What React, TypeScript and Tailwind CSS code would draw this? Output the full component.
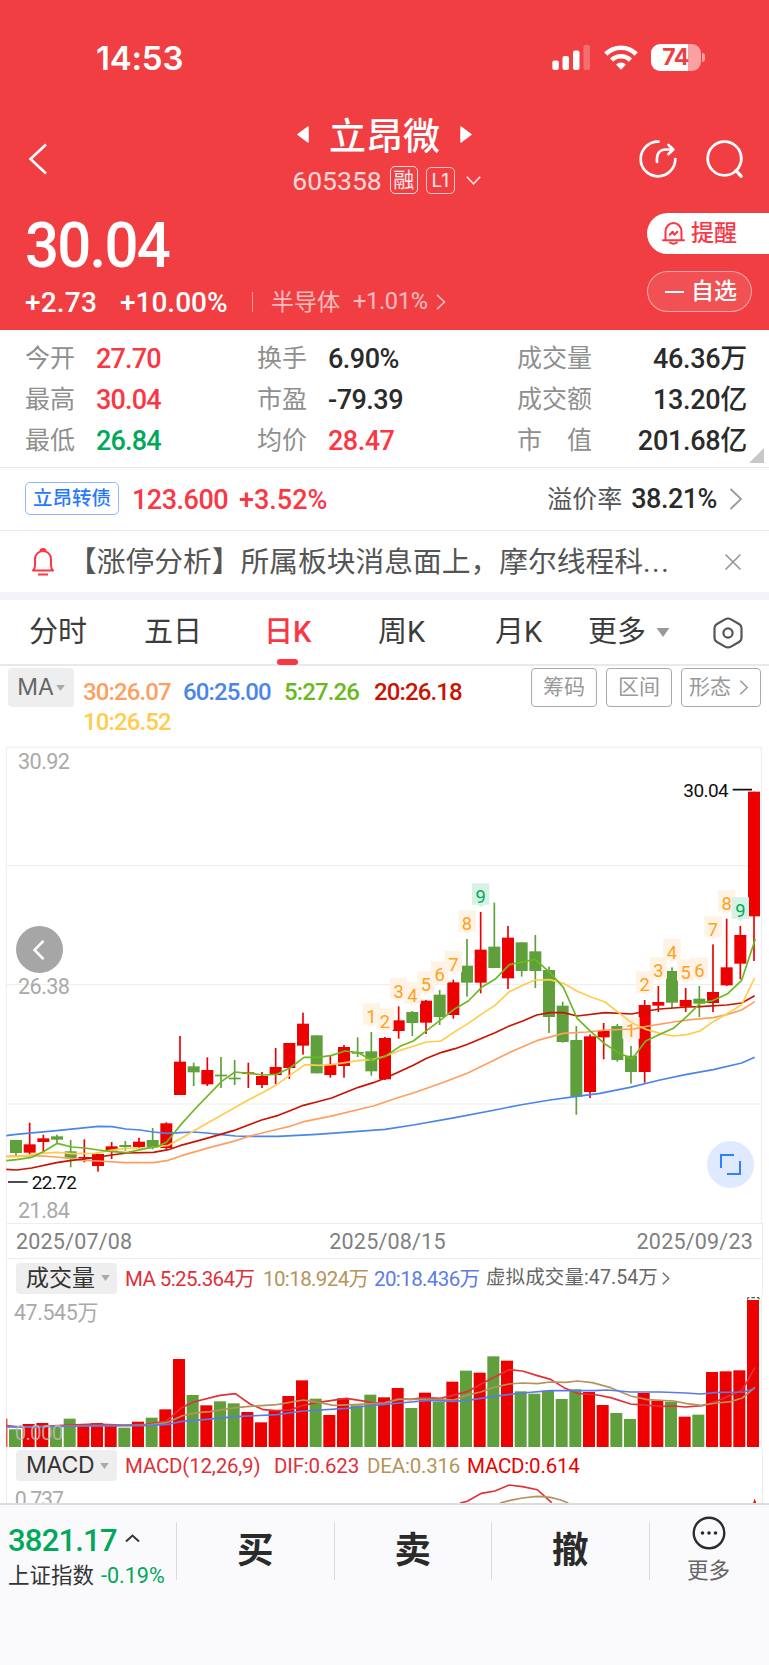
import { X } from 'lucide-react'

const RED = '#ec0000'
const GREEN = '#5f9f3c'

// candle: [up, body top, body bottom, high, low]
const candles: [number, number, number, number, number][] = [
  [0, 1200, 1239, 1200, 1248],
  [1, 1213, 1238, 1148, 1242],
  [1, 1195, 1206, 1184, 1236],
  [0, 1189, 1199, 1184, 1209],
  [0, 1234, 1254, 1200, 1282],
  [1, 1251, 1255, 1198, 1267],
  [1, 1242, 1278, 1242, 1295],
  [1, 1219, 1231, 1206, 1257],
  [0, 1215, 1221, 1203, 1232],
  [1, 1205, 1221, 1193, 1224],
  [0, 1200, 1222, 1164, 1228],
  [1, 1150, 1224, 1147, 1228],
  [1, 965, 1065, 888, 1065],
  [0, 979, 997, 968, 1038],
  [1, 990, 1033, 952, 1038],
  [0, 1004, 1009, 951, 1044],
  [0, 1013, 1018, 960, 1035],
  [1, 997, 1002, 968, 1044],
  [1, 1008, 1035, 996, 1044],
  [1, 981, 1005, 924, 1032],
  [1, 909, 984, 909, 1017],
  [1, 851, 917, 818, 944],
  [0, 886, 1000, 886, 1000],
  [1, 975, 1005, 948, 1013],
  [1, 921, 978, 915, 1013],
  [0, 936, 941, 892, 951],
  [0, 934, 994, 876, 1007],
  [1, 894, 1018, 891, 1020],
  [1, 841, 873, 799, 896],
  [0, 816, 849, 813, 888],
  [1, 782, 848, 780, 882],
  [0, 764, 831, 750, 855],
  [1, 727, 825, 719, 836],
  [0, 677, 728, 597, 770],
  [1, 629, 728, 516, 760],
  [0, 620, 684, 488, 684],
  [1, 593, 715, 558, 747],
  [0, 607, 693, 607, 710],
  [0, 634, 693, 585, 744],
  [0, 690, 831, 680, 879],
  [0, 797, 906, 785, 908],
  [0, 900, 1070, 858, 1124],
  [1, 889, 1056, 883, 1074],
  [1, 872, 892, 849, 958],
  [0, 858, 960, 852, 965],
  [0, 947, 996, 918, 1031],
  [1, 795, 996, 780, 1028],
  [1, 786, 797, 738, 816],
  [0, 693, 788, 682, 804],
  [1, 780, 800, 744, 816],
  [0, 776, 791, 738, 831],
  [1, 756, 789, 613, 816],
  [1, 682, 736, 536, 738],
  [1, 585, 671, 558, 718],
  [1, 155, 529, 155, 663],
]

const volumes = [
  628, 612, 609, 620, 596, 615, 609, 615, 623, 605, 593, 568, 417, 525, 556, 544, 550, 576, 607, 572,
  528, 481, 536, 585, 535, 556, 524, 532, 504, 564, 518, 545, 485, 452, 458, 409, 422, 514, 521, 512,
  537, 508, 516, 555, 579, 597, 519, 542, 545, 590, 584, 456, 454, 451, 240,
]

const maLines = [
  {
    color: '#4a86e8',
    points:
      '19,1187 48,1183 170,1172 295,1159 336,1160 378,1167 420,1170 460,1176 500,1180 540,1178 582,1176 620,1179 665,1184 706,1188 750,1189 835,1189 950,1183 1155,1168 1240,1155 1365,1133 1485,1110 1560,1095 1650,1080 1725,1070 1800,1060 1890,1042 1980,1020 2060,1003 2140,989 2225,969 2264,952',
  },
  {
    color: '#ff9f5f',
    points:
      '19,1249 110,1247 170,1251 210,1255 250,1261 295,1263 375,1268 460,1268 505,1261 545,1247 620,1225 700,1204 750,1188 835,1167 870,1159 915,1144 990,1129 1120,1098 1200,1071 1240,1059 1325,1029 1405,998 1500,952 1530,937 1610,902 1690,880 1760,876 1820,870 1900,867 1940,859 2020,846 2080,838 2140,833 2180,824 2225,810 2264,785',
  },
  {
    color: '#c81400',
    points:
      '19,1288 50,1290 95,1284 170,1268 210,1262 290,1252 335,1245 380,1239 460,1237 505,1229 540,1217 620,1195 700,1172 785,1140 835,1126 870,1112 910,1096 950,1086 995,1074 1075,1042 1120,1028 1155,1015 1240,976 1280,955 1325,937 1365,926 1405,912 1442,896 1485,878 1530,857 1570,842 1610,825 1650,818 1690,818 1732,828 1815,818 1895,822 1940,813 1980,807 2060,801 2100,800 2180,795 2225,789 2264,767',
  },
  {
    color: '#ffcc4d',
    points:
      '19,1250 60,1250 120,1240 172,1237 215,1241 285,1240 330,1231 375,1225 440,1224 505,1216 545,1194 582,1172 665,1125 750,1077 790,1057 830,1034 915,974 955,976 995,974 1075,962 1120,958 1155,949 1200,931 1280,906 1323,903 1365,875 1405,850 1442,824 1485,796 1528,755 1570,735 1605,720 1650,719 1690,730 1732,754 1775,772 1815,786 1855,817 1895,848 1940,869 1980,880 2020,888 2060,884 2100,873 2140,845 2180,822 2225,794 2264,714',
  },
  {
    color: '#6aba1f',
    points:
      '19,1262 50,1259 95,1252 130,1235 172,1210 215,1221 255,1224 295,1230 330,1234 380,1238 440,1225 475,1219 500,1206 540,1157 582,1110 665,1024 705,996 745,1000 790,1005 830,1003 870,984 912,952 955,952 995,946 1035,933 1075,938 1118,962 1155,949 1200,919 1240,903 1280,872 1323,839 1365,806 1405,783 1447,740 1485,718 1528,674 1605,658 1650,698 1690,742 1732,836 1775,877 1815,912 1855,938 1897,956 1937,903 1980,883 2020,865 2060,830 2100,790 2140,781 2183,761 2225,721 2266,597',
  },
]

const volumeLines = [
  {
    color: '#e03038',
    points:
      '19,617 60,621 110,620 190,616 280,612 370,615 440,613 500,603 545,563 580,546 660,526 706,521 750,552 790,569 830,572 870,570 910,556 950,548 1040,535 1120,548 1152,549 1193,536 1232,538 1272,533 1322,535 1402,515 1442,493 1482,472 1527,449 1567,453 1612,467 1652,478 1692,503 1732,520 1792,525 1832,533 1892,552 1982,559 2022,558 2057,561 2107,557 2152,543 2192,526 2227,510 2265,442',
  },
  {
    color: '#b5935a',
    points:
      '19,621 440,615 500,608 545,588 590,578 630,575 706,563 750,559 830,554 910,540 960,548 1000,556 1060,554 1152,549 1197,538 1322,538 1362,540 1402,525 1442,516 1482,502 1527,492 1567,489 1612,491 1652,486 1697,487 1732,483 1777,488 1832,503 1892,528 1942,539 2022,543 2057,550 2102,556 2152,549 2192,545 2227,534 2265,502',
  },
  {
    color: '#5b7be6',
    points:
      '19,620 110,621 250,618 440,617 505,613 545,604 620,598 706,590 830,584 910,573 1040,565 1100,558 1152,553 1232,546 1292,541 1362,544 1402,541 1482,529 1567,519 1652,512 1782,512 1822,510 1892,516 1982,516 2057,519 2102,522 2152,517 2232,516 2265,505',
  },
]

const quotes = [
  ['今开', '27.70', 'text-[#fb3744]', '换手', '6.90%', 'text-[#2b2b2b]', '成交量', '46.36万'],
  ['最高', '30.04', 'text-[#fb3744]', '市盈', '-79.39', 'text-[#2b2b2b]', '成交额', '13.20亿'],
  ['最低', '26.84', 'text-[#00a85a]', '均价', '28.47', 'text-[#fb3744]', '市值', '201.68亿'],
]

function Triangle({ className }: { className: string }) {
  return (
    <svg className={className} viewBox="0 0 10 7">
      <path d="M0 0h10L5 7z" fill="currentColor" />
    </svg>
  )
}

function Arrow({ className }: { className: string }) {
  return (
    <svg className={className} viewBox="0 0 10 16" fill="none" stroke="currentColor" strokeWidth="1.6">
      <path d="M1 0.800L8.500 8L1 15.200" />
    </svg>
  )
}

function Signals() {
  const marks = []
  for (const start of [26, 45]) {
    for (let n = 1; n <= 9; n++) {
      const i = start + n - 1
      const x = 48 + 41 * i
      const high = candles[i][3]
      const last = n === 9
      marks.push(
        <g key={i}>
          <path d={`M${x - 26} ${high - 86}h52v64h-16l-10 8l-10-8h-16z`} fill={last ? '#d5f2e5' : '#fff3e6'} />
          <text x={x} y={high - 26} textAnchor="middle" fontSize="55" fill={last ? '#00ab5c' : '#ffa020'}>
            {n}
          </text>
        </g>,
      )
    }
  }
  return <>{marks}</>
}

function PricePanel() {
  return (
    <div className="relative h-[483px]">
      <svg className="block h-full w-full" viewBox="0 0 2307 1449" fontFamily="Roboto, sans-serif">
        <path
          d="M19 1449V22H2284V1449M19 377H2284M19 734H2284M19 1092H2284"
          fill="none"
          stroke="#ededef"
          strokeWidth="3"
        />
        <g fill="#aaaaaa" fontSize="65">
          <text x="54" y="88" textLength="156">30.92</text>
          <text x="54" y="761" textLength="156">26.38</text>
          <text x="54" y="1435" textLength="156">21.84</text>
        </g>
        {candles.map(([up, top, bottom, high, low], i) => {
          const x = 48 + 41 * i
          return (
            <g key={i} fill={up ? RED : GREEN}>
              <rect x={x - 2.5} y={high} width="5" height={low - high} />
              <rect x={x - 18} y={top} width="36" height={bottom - top} />
            </g>
          )
        })}
        <Signals />
        {maLines.map((l) => (
          <polyline key={l.color} points={l.points} fill="none" stroke={l.color} strokeWidth="5" strokeLinejoin="round" />
        ))}
        <path d="M24 1326H83M2198 149H2256" stroke="#111" strokeWidth="5" />
        <g fill="#111" fontSize="57">
          <text x="95" y="1348" textLength="136">22.72</text>
          <text x="2050" y="171" textLength="136">30.04</text>
        </g>
      </svg>
      <button className="absolute left-[16px] top-[186px] flex size-[47px] items-center justify-center rounded-full bg-[#a6a6a6]">
        <svg className="mr-[2px] h-5 w-3" viewBox="0 0 12 20" fill="none" stroke="#fff" strokeWidth="2.6">
          <path d="M10.500 0.800L1.500 10l9 9.200" />
        </svg>
      </button>
      <button className="absolute left-[707px] top-[401px] flex size-[47px] items-center justify-center rounded-full bg-[#dfe9ff]">
        <svg className="size-[21px]" viewBox="0 0 21 21" fill="none" stroke="#2f80ff" strokeWidth="2">
          <path d="M1 14V1h13M20 7v13H7" />
        </svg>
      </button>
    </div>
  )
}

function VolumePanel() {
  return (
    <svg className="block h-[154px] w-full" viewBox="0 225 2307 462" fontFamily='Roboto, "Noto Sans CJK SC", sans-serif'>
      <path d="M19 225V687M2284 225V687" stroke="#ededef" strokeWidth="3" />
      <text x="42" y="300" fill="#aaaaaa" fontSize="64" textLength="254">47.545万</text>
      <rect x="19" y="596" width="3" height="85" fill={RED} />
      {volumes.map((top, i) => (
        <rect key={i} x={27 + 41 * i} y={top} width="36" height={681 - top} fill={candles[i][0] ? RED : GREEN} />
      ))}
      <path d="M2243 239V233H2277V239" fill="none" stroke="#333" strokeWidth="3" strokeDasharray="11 6" />
      {volumeLines.map((l) => (
        <polyline key={l.color} points={l.points} fill="none" stroke={l.color} strokeWidth="5" strokeLinejoin="round" />
      ))}
      <text x="44" y="659" fill="#bbbbbb" fillOpacity="0.85" fontSize="62" textLength="146">0.000</text>
    </svg>
  )
}

function Header() {
  return (
    <header className="h-[330px] bg-[#f03e42] text-white">
      <div className="flex h-[115px] items-center justify-between pl-[96px] pr-[64px]">
        <span className="pt-[2px] font-['Inter'] text-[33px] font-semibold tracking-[-0.200px]">14:53</span>
        <div className="flex items-center">
          <svg className="h-[25px] w-[39px]" viewBox="0 0 39 25" fill="#fff">
            <rect x="0.300" y="15.500" width="6.500" height="9.500" rx="2" />
            <rect x="10.500" y="11" width="6.500" height="14" rx="2" />
            <rect x="21" y="5.500" width="6.500" height="19.500" rx="2" />
            <rect x="31.500" y="0" width="6.500" height="25" rx="2" opacity="0.25" />
          </svg>
          <svg className="ml-[13px] h-[25px] w-[34px]" viewBox="0 0 34 25" fill="none" stroke="#fff" strokeWidth="4.600">
            <path d="M1.800 9a21.500 21.500 0 0 1 30.400 0" />
            <path d="M7.600 15.200a13.300 13.300 0 0 1 18.800 0" />
            <path d="M17 24.800l-5-5.200a7.200 7.200 0 0 1 10 0z" fill="#fff" stroke="none" />
          </svg>
          <div className="ml-[13px] flex h-[27px] w-[50px] items-center justify-center rounded-[9px] bg-[linear-gradient(90deg,#fff_75%,#f8a0a2_75%)] pr-[1px] font-['Inter'] text-[23px] font-bold leading-none tracking-[-0.500px] text-[#f03e42]">
            74
          </div>
          <div className="ml-[1px] h-[9px] w-[3px] rounded-r-full bg-[#f8a0a2]" />
        </div>
      </div>

      <div className="grid h-[90px] grid-cols-[1fr_auto_1fr] items-center">
        <svg className="mb-[3px] ml-[28px] h-[32px] w-[20px]" viewBox="0 0 20 32" fill="none" stroke="#fff" strokeWidth="2.600">
          <path d="M18 1.500L2.500 16l15.500 14.500" />
        </svg>
        <div className="w-[200px]">
          <div className="flex h-[40px] items-center justify-center pb-[1px]">
            <svg className="mr-[20px] h-[17px] w-[12px]" viewBox="0 0 12 17">
              <path d="M11 1v15L1 8.500z" fill="#fff" stroke="#fff" strokeWidth="1.500" strokeLinejoin="round" />
            </svg>
            <h1 className="font-['Noto_Sans_CJK_SC'] text-[37px] font-medium leading-none">立昂微</h1>
            <svg className="ml-[20px] h-[17px] w-[12px]" viewBox="0 0 12 17">
              <path d="M1 1v15L11 8.500z" fill="#fff" stroke="#fff" strokeWidth="1.500" strokeLinejoin="round" />
            </svg>
          </div>
          <div className="flex h-[50px] items-center justify-center pl-[4px]">
            <span className="pt-[2px] text-[26.500px] leading-none text-white/80">605358</span>
            <span className="ml-[8px] flex h-[28px] w-[28px] items-center justify-center rounded-[5px] border-[1.500px] border-white/80 text-[21px] leading-none text-white/90">融</span>
            <span className="ml-[8px] flex h-[27px] w-[29px] items-center justify-center rounded-[5px] border border-white/70 font-['Inter'] text-[19px] leading-none text-white/90">L1</span>
            <svg className="ml-[11px] h-[9px] w-[15px]" viewBox="0 0 15 9" fill="none" stroke="#fff" strokeOpacity="0.85" strokeWidth="1.600">
              <path d="M0.800 0.800l6.700 7l6.700-7" />
            </svg>
          </div>
        </div>
        <div className="mb-[3px] flex items-center justify-end pr-[25px]">
          <svg className="size-[38px]" viewBox="0 0 38 38" fill="none" stroke="#fff" strokeWidth="2.700" strokeLinecap="round" strokeLinejoin="round">
            <path d="M19.500 1.700a17.300 17.300 0 1 0 16.800 17.300" />
            <path d="M18 22c-0.600-8 2-12.500 9-12.500h6M29.500 5l4.800 4.500l-4.800 4.500" />
          </svg>
          <svg className="ml-[29px] size-[38px]" viewBox="0 0 38 38" fill="none" stroke="#fff" strokeWidth="2.800" strokeLinecap="round">
            <circle cx="18.500" cy="18.500" r="16.800" />
            <path d="M30 30.500l5 5.700" strokeWidth="3.400" />
          </svg>
        </div>
      </div>

      <div className="flex justify-between">
        <div className="pl-[25px]">
          <div className="flex h-[79px] origin-left scale-x-[0.95] items-center pt-[2px] text-[63px] font-medium leading-none tracking-[-1.800px]">30.04</div>
          <div className="flex h-[36px] items-center leading-none">
            <span className="w-[95px] pt-[2px] text-[28px] font-medium tracking-[0.200px]">+2.73</span>
            <span className="w-[132px] pt-[2px] text-[28px] font-medium">+10.00%</span>
            <span className="h-[20px] w-px bg-white/50" />
            <span className="ml-[18px] text-[23px] text-white/65">半导体</span>
            <span className="ml-[13px] text-[23.500px] tracking-[-0.300px] text-white/65">+1.01%</span>
            <Arrow className="ml-[8px] h-[16px] w-[10px] text-white/65" />
          </div>
        </div>
        <div className="flex w-[122px] flex-col gap-[17px] pt-[8px] text-[23px] font-medium leading-none">
          <button className="flex h-[41px] items-center rounded-l-full bg-white pl-[15px] text-[#fb3744]">
            <svg className="mr-[6px] h-[23px] w-[23px]" viewBox="0 0 23 23" fill="none" stroke="currentColor" strokeWidth="2" strokeLinejoin="round" strokeLinecap="round">
              <path d="M1 18.200h21M3.500 18V9.500a8 8.500 0 0 1 16 0V18M8 20.500a5 4 0 0 0 7 0" />
              <path d="M7.800 12.800l2.800-3l1.800 3l3-3" />
            </svg>
            提醒
          </button>
          <button className="flex h-[41px] w-[105px] items-center rounded-full border border-white/50 bg-white/10 pl-[17px]">
            <span className="mr-[7px] h-[2px] w-[19px] bg-white" />
            自选
          </button>
        </div>
      </div>
    </header>
  )
}

function Quotes() {
  return (
    <section className="relative h-[138px] border-b border-[#e9e9eb] pl-[25px] pt-[8px] leading-none">
      {quotes.map(([a, av, ac, b, bv, bc, c, cv]) => (
        <div key={a} className="grid h-[41.200px] grid-cols-[232px_260px_230px] items-center">
          <div className="flex items-center">
            <span className="w-[71px] text-[25px] text-[#8f8f8f]">{a}</span>
            <span className={`pt-[2px] text-[27px] font-medium tracking-[-0.800px] ${ac}`}>{av}</span>
          </div>
          <div className="flex items-center">
            <span className="w-[71px] text-[25px] text-[#8f8f8f]">{b}</span>
            <span className={`pt-[2px] text-[27px] font-medium tracking-[-0.500px] ${bc}`}>{bv}</span>
          </div>
          <div className="flex items-center justify-between">
            <span className="flex w-[75px] justify-between text-[25px] text-[#8f8f8f]">
              {c.split('').map((ch) => (
                <span key={ch}>{ch}</span>
              ))}
            </span>
            <span className="pt-[1px] text-[27px] font-medium tracking-[-0.300px] text-[#2b2b2b]">{cv}</span>
          </div>
        </div>
      ))}
      <svg className="absolute bottom-[4px] right-[5px] size-[15px]" viewBox="0 0 15 15">
        <path d="M15 0v15H0z" fill="#c8c8c8" />
      </svg>
    </section>
  )
}

function BondRow() {
  return (
    <section className="flex h-[63px] items-center border-b border-[#e9e9eb] pl-[25px] leading-none">
      <span className="mb-[1px] flex h-[33px] w-[94px] items-center justify-center rounded-[5px] border border-[#8fb6ff] text-[19.500px] font-medium text-[#2878ff]">立昂转债</span>
      <span className="ml-[13px] w-[107px] pt-[2px] text-[27px] font-medium tracking-[-0.500px] text-[#fb3744]">123.600</span>
      <span className="pt-[2px] text-[27px] font-medium text-[#fb3744]">+3.52%</span>
      <span className="ml-auto text-[25px] text-[#555]">溢价率</span>
      <span className="ml-[9px] text-[27px] font-medium tracking-[-0.500px] text-[#2b2b2b]">38.21%</span>
      <svg className="ml-[12px] mr-[26px] h-[22px] w-[14px]" viewBox="0 0 14 22" fill="none" stroke="#999" strokeWidth="1.800">
        <path d="M1.500 1l10.500 10l-10.500 10" />
      </svg>
    </section>
  )
}

function NewsRow() {
  return (
    <section className="flex h-[61px] items-center pl-[31px]">
      <svg className="h-[28px] w-[24px]" viewBox="0 0 24 28" fill="none" stroke="#fb3744" strokeWidth="2" strokeLinejoin="round">
        <path d="M9.500 3a2.500 2 0 0 1 5 0M2 22.500c1.500-1.500 2-3 2-5V11a8 8 0 0 1 16 0v6.500c0 2 0.500 3.500 2 5zM7 26.600h10" />
      </svg>
      <span className="ml-[13px] pt-[2px] text-[28.750px] leading-none text-[#555]">
        【涨停分析】所属板块消息面上，摩尔线程科<span className="tracking-[1.500px]">...</span>
      </span>
      <X className="ml-auto mr-[22px] size-[28px] shrink-0 text-[#999]" strokeWidth={1.5} />
    </section>
  )
}

function Tabs() {
  return (
    <nav className="flex h-[66px] items-center border-b-2 border-[#e9e9eb] pl-[29px] pt-[1px] text-[29px] leading-none text-[#3c3c3c]">
      <span className="w-[115px]">分时</span>
      <span className="w-[120px]">五日</span>
      <span className="relative flex h-full w-[114px] items-center font-medium text-[#fb3744]">
        日K
        <span className="absolute bottom-[-1px] left-[13px] h-[6px] w-[21px] rounded-[3px] bg-[#fb3744]" />
      </span>
      <span className="w-[117px]">周K</span>
      <span className="w-[93px]">月K</span>
      <span>更多</span>
      <Triangle className="ml-[10px] h-[9px] w-[14px] text-[#999999]" />
      <svg className="ml-[43px] h-[32px] w-[30px]" viewBox="0 0 30 32" fill="none" stroke="#555" strokeWidth="2.2">
        <path d="M15 1.500q1.500 0 3 0.900l8 4.600q2.500 1.500 2.500 4v10q0 2.500-2.500 4l-8 4.600q-3 1.700-6 0l-8-4.600q-2.500-1.500-2.500-4v-10q0-2.500 2.500-4l8-4.600q1.500-0.900 3-0.900z" />
        <circle cx="15" cy="16" r="4.600" />
      </svg>
    </nav>
  )
}

function MaRow() {
  return (
    <div className="flex h-[74px] pl-[8px] pt-[2px] leading-none">
      <div className="flex h-[39px] w-[66px] items-center justify-center rounded-[4px] bg-[#eeeeee] font-['Inter'] text-[23px] text-[#666]">
        MA
        <Triangle className="ml-[2px] h-[6px] w-[9px] text-[#aaa]" />
      </div>
      <div className="ml-[9px] w-[420px] pt-[9px] text-[24px] font-medium leading-[30px] tracking-[-0.900px]">
        <span className="inline-block w-[100px] text-[#ff9f5f]">30:26.07</span>
        <span className="inline-block w-[101px] text-[#4a86e8]">60:25.00</span>
        <span className="inline-block w-[90px] text-[#6aba1f]">5:27.26</span>
        <span className="inline-block w-[101px] text-[#c81400]">20:26.18</span>
        <span className="inline-block text-[#ffcc4d]">10:26.52</span>
      </div>
      <div className="ml-[28px] flex h-[39px] gap-[9px] text-[21px] text-[#999]">
        <button className="w-[66px] rounded-[4px] border border-[#aaa]">筹码</button>
        <button className="w-[66px] rounded-[4px] border border-[#aaa]">区间</button>
        <button className="flex w-[80px] items-center rounded-[4px] border border-[#aaa] pl-[7px]">
          形态
          <Arrow className="ml-[8px] h-[15px] w-[10px]" />
        </button>
      </div>
    </div>
  )
}

function BottomBar() {
  return (
    <footer className="flex h-[162px] border-t-2 border-[#dcdce0] bg-[#fafafc] leading-none">
      <div className="w-[176px] pl-[8px] pt-[17px]">
        <div className="flex h-[36px] items-center text-[31px] font-medium tracking-[-0.800px] text-[#00a85a]">
          3821.17
          <svg className="mb-[4px] ml-[8px] h-[8px] w-[15px]" viewBox="0 0 15 8" fill="none" stroke="#333" strokeWidth="2">
            <path d="M1 7.500l6.500-6l6.500 6" />
          </svg>
        </div>
        <div className="flex h-[36px] items-center text-[21.500px] text-[#333]">
          上证指数
          <span className="ml-[7px] text-[#00a85a]">-0.19%</span>
        </div>
      </div>
      {['买', '卖', '撤'].map((t) => (
        <div key={t} className="mt-[17px] flex h-[58px] w-[157.500px] items-center justify-center border-l border-[#dcdce0] text-[36.500px] font-bold text-[#2b2b2b]">
          {t}
        </div>
      ))}
      <div className="mt-[17px] h-[58px] w-[119px] border-l border-[#dcdce0]">
        <div className="mt-[-6px] flex flex-col items-center text-[21.500px] text-[#666]">
          <svg className="mb-[10px] size-[34px]" viewBox="0 0 34 34" fill="#2b2b2b">
            <circle cx="17" cy="17" r="15.300" fill="none" stroke="#2b2b2b" strokeWidth="2.400" />
            <circle cx="10.500" cy="17" r="1.800" />
            <circle cx="17" cy="17" r="1.800" />
            <circle cx="23.500" cy="17" r="1.800" />
          </svg>
          更多
        </div>
      </div>
    </footer>
  )
}

export default function App() {
  return (
    <div className="h-[1665px] w-[769px] overflow-hidden bg-white font-[Roboto,'Noto_Sans_CJK_SC',sans-serif]">
      <Header />
      <Quotes />
      <BondRow />
      <NewsRow />
      <div className="h-[8px] bg-[#f2f4f8]" />
      <Tabs />

      <div className="h-[837px] overflow-hidden">
        <MaRow />
        <PricePanel />
        <div className="mx-[6px] flex h-[36px] items-center justify-between border-x border-y border-[#ededef] px-[9px] pt-[2px] text-[21.500px] leading-none tracking-[0.200px] text-[#808080]">
          <span>2025/07/08</span>
          <span className="pl-[6px]">2025/08/15</span>
          <span>2025/09/23</span>
        </div>
        <div className="mx-[6px] flex h-[36px] items-center whitespace-nowrap border-x border-[#ededef] pl-[9px] pt-[2px] text-[20.500px] leading-none tracking-[-0.600px]">
          <span className="flex h-[31px] w-[101px] items-center rounded-[4px] bg-[#eeeeee] pl-[10px] text-[23px] tracking-normal text-[#333]">
            成交量
            <Triangle className="ml-[6px] h-[6px] w-[9px] text-[#aaa]" />
          </span>
          <span className="ml-[8px] w-[138px] pt-[2px] text-[#e03038]">MA 5:25.364万</span>
          <span className="w-[111px] pt-[2px] text-[#b5935a]">10:18.924万</span>
          <span className="w-[112px] pt-[2px] text-[#5b7be6]">20:18.436万</span>
          <span className="text-[19.500px] tracking-[0.100px] text-[#666]">虚拟成交量:47.54万</span>
          <Arrow className="ml-[4px] h-[13px] w-[8px] text-[#666]" />
        </div>
        <VolumePanel />
        <div className="mx-[6px] h-[54px] border-x border-[#ededef]">
          <div className="flex h-[33px] items-center whitespace-nowrap pl-[9px] text-[20.500px] leading-none tracking-[-0.200px]">
            <span className="flex h-[31px] w-[101px] items-center rounded-[4px] bg-[#eeeeee] pl-[10px] font-['Inter'] text-[23px] text-[#333]">
              MACD
              <Triangle className="ml-[6px] h-[6px] w-[9px] text-[#aaa]" />
            </span>
            <span className="ml-[8px] w-[149px] pt-[2px] text-[#e03038]">MACD(12,26,9)</span>
            <span className="w-[93px] pt-[2px] text-[#e03038]">DIF:0.623</span>
            <span className="w-[100px] pt-[2px] text-[#b5935a]">DEA:0.316</span>
            <span className="pt-[2px] text-[#ec0000]">MACD:0.614</span>
          </div>
          <svg className="ml-[-7px] block h-[21px] w-[769px]" viewBox="0 786 2307 63" fontFamily="Roboto, sans-serif">
            <text x="44" y="861" fill="#aaaaaa" fontSize="64" textLength="148">0.737</text>
            <path d="M1380 849L1402 844L1444 820L1485 813L1527 795L1567 800L1612 809L1655 848" fill="none" stroke="#e03038" strokeWidth="5" />
            <path d="M1500 849L1527 842L1567 834L1612 829L1652 832L1682 840L1705 849" fill="none" stroke="#b5935a" strokeWidth="5" />
            <path d="M2264 836l5 14h-10z" fill={RED} />
          </svg>
        </div>
      </div>
      <BottomBar />
    </div>
  )
}
